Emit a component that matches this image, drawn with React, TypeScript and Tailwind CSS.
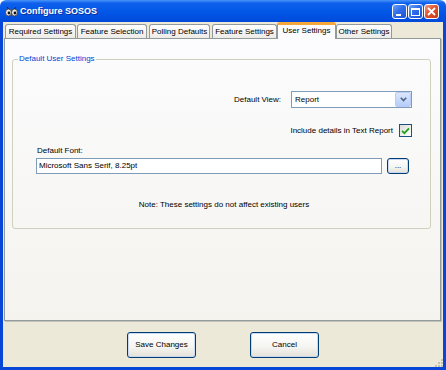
import React from 'react';

const tabs = [
  { label: 'Required Settings', w: 'w-[71px]', ml: 'ml-[1px]' },
  { label: 'Feature Selection', w: 'w-[70px]', ml: 'ml-[1px]' },
  { label: 'Polling Defaults', w: 'w-[61px]', ml: 'ml-[2px]' },
  { label: 'Feature Settings', w: 'w-[65px]', ml: 'ml-[2px]' },
  { label: 'User Settings', w: 'w-[59px]', ml: 'ml-0', active: true },
  { label: 'Other Settings', w: 'w-[56px]', ml: 'ml-0' },
];

const font = "font-['Liberation_Sans',Arial,sans-serif]";

const TitleIcon = () => (
  <svg width="13" height="11" viewBox="0 0 13 11">
    <path d="M2 1 L3.5 3 M11 1 L9.5 3" stroke="#222" strokeWidth="1" />
    <ellipse cx="3.5" cy="6.5" rx="3" ry="3.5" fill="#e8e8e8" stroke="#333" strokeWidth="0.8" />
    <ellipse cx="9.5" cy="6.5" rx="3" ry="3.5" fill="#e8e8e8" stroke="#333" strokeWidth="0.8" />
    <circle cx="4" cy="7" r="1.4" fill="#111" />
    <circle cx="10" cy="7" r="1.4" fill="#111" />
  </svg>
);

const CaptionButton = ({ kind }: { kind: 'min' | 'max' | 'close' }) => (
  <div
    className={`w-[15px] h-[15px] rounded-[3px] border border-white flex items-center justify-center ${
      kind === 'close'
        ? 'bg-[linear-gradient(135deg,#F29A7D_0%,#E2542F_45%,#C23A14_100%)]'
        : 'bg-[linear-gradient(135deg,#6FA3F7_0%,#2F6EEA_45%,#1D4FD4_100%)]'
    }`}
  >
    {kind === 'min' && <div className="w-[5px] h-[2px] bg-white mt-[7px] -ml-[3px]" />}
    {kind === 'max' && <div className="w-[9px] h-[8px] border border-white border-t-2" />}
    {kind === 'close' && (
      <svg width="9" height="9" viewBox="0 0 9 9">
        <path d="M1 1 L8 8 M8 1 L1 8" stroke="white" strokeWidth="1.8" />
      </svg>
    )}
  </div>
);

const XpButton = ({ children, className = '' }: { children: React.ReactNode; className?: string }) => (
  <div
    className={`flex items-center justify-center rounded-[3px] border border-[#003C74] bg-[linear-gradient(to_bottom,#FFFFFF_0%,#F4F4F0_60%,#E3E0D6_100%)] shadow-[inset_0_0_0_1px_#C9D8F3] text-black ${className}`}
  >
    {children}
  </div>
);

export default function App() {
  return (
    <div className={`w-[446px] h-[370px] flex flex-col ${font} text-[8px] leading-[10px] text-black`}>
      {/* title bar */}
      <div className="h-[22px] rounded-t-[6px] bg-[linear-gradient(to_bottom,#4A95F8_0%,#0E60EC_14%,#0257E6_55%,#0049DA_100%)] flex items-center pl-[5px] pr-[7px]">
        <TitleIcon />
        <span className="ml-[2px] text-white font-bold text-[9px] leading-[11px] [text-shadow:1px_1px_0_#0A2FA0]">
          Configure SOSOS
        </span>
        <div className="ml-auto flex gap-[1px] mt-[1px]">
          <CaptionButton kind="min" />
          <CaptionButton kind="max" />
          <CaptionButton kind="close" />
        </div>
      </div>

      {/* client */}
      <div className="flex-1 flex flex-col bg-[#ECE9D8] border-x-[3px] border-b-[3px] border-[#0846D8] relative">
        <div className="ml-[1px] w-[438px]">
          <div className="flex items-end h-[16px]">
            {tabs.map((t) =>
              t.active ? (
                <div
                  key={t.label}
                  className={`${t.w} ${t.ml} h-[17px] -mb-[1px] relative z-10 rounded-t-[3px] border-x border-[#919B9C] border-t-[3px] border-t-[#F5A73C] bg-[#FCFCFE] text-center leading-[11px]`}
                >
                  {t.label}
                </div>
              ) : (
                <div
                  key={t.label}
                  className={`${t.w} ${t.ml} h-[14px] rounded-t-[3px] border border-b-0 border-[#919B9C] bg-[linear-gradient(to_bottom,#FFFFFF,#ECEBE6)] text-center leading-[13px]`}
                >
                  {t.label}
                </div>
              )
            )}
          </div>

          {/* tab page */}
          <div className="h-[283px] w-[437px] border border-[#919B9C] bg-[linear-gradient(to_bottom,#FCFCFE,#F4F3EE)] shadow-[1px_1px_0_#C4C2B8] pt-[15px] pl-[7px]">
            <fieldset className="w-[419px] h-[175px] border border-[#D0D0BF] rounded-[3px] pl-[23px] pr-[18px]">
              <legend className="ml-[-18px] px-[1px] text-[#0046D5] leading-[10px]">Default User Settings</legend>

              <div className="flex items-center justify-end mt-[27px]">
                <span className="mr-[10px]">Default View:</span>
                <div className="w-[121px] h-[17px] border border-[#7F9DB9] bg-white flex items-center">
                  <span className="pl-[3px] flex-1">Report</span>
                  <div className="w-[16px] h-[15px] rounded-[2px] border border-[#B9CCF5] bg-[linear-gradient(to_bottom,#DCE7FD,#B6CDFA)] flex items-center justify-center">
                    <svg width="7" height="5" viewBox="0 0 7 5">
                      <path d="M0.8 0.8 L3.5 3.5 L6.2 0.8" fill="none" stroke="#4D6185" strokeWidth="1.6" />
                    </svg>
                  </div>
                </div>
              </div>

              <div className="flex items-center justify-end mt-[16px]">
                <span className="mr-[6px]">Include details in Text Report</span>
                <div className="w-[13px] h-[13px] border border-[#1C5180] bg-[linear-gradient(135deg,#DCDCD7,#FFFFFF)] flex items-center justify-center">
                  <svg width="9" height="8" viewBox="0 0 9 8">
                    <path d="M1 3.8 L3.4 6.2 L8 1.4" fill="none" stroke="#21A121" strokeWidth="1.8" />
                  </svg>
                </div>
              </div>

              <div className="mt-[9px] ml-[1px]">Default Font:</div>
              <div className="flex items-center mt-[2px]">
                <div className="w-[346px] h-[16px] border border-[#7F9DB9] bg-white flex items-center pl-[2px]">
                  Microsoft Sans Serif, 8.25pt
                </div>
                <XpButton className="ml-[5px] w-[22px] h-[16px] leading-[8px]">...</XpButton>
              </div>

              <div className="mt-[26px] text-center">Note: These settings do not affect existing users</div>
            </fieldset>
          </div>
        </div>

        {/* buttons */}
        <div className="flex justify-center gap-[54px] mt-[11px]">
          <XpButton className="w-[69px] h-[26px]">Save Changes</XpButton>
          <XpButton className="w-[69px] h-[26px]">Cancel</XpButton>
        </div>

        <svg className="absolute right-0 bottom-0" width="8" height="8" viewBox="0 0 8 8">
          <rect x="6" y="0" width="2" height="2" fill="#C5C2B2" />
          <rect x="3" y="3" width="2" height="2" fill="#C5C2B2" />
          <rect x="6" y="3" width="2" height="2" fill="#C5C2B2" />
          <rect x="0" y="6" width="2" height="2" fill="#C5C2B2" />
          <rect x="3" y="6" width="2" height="2" fill="#C5C2B2" />
          <rect x="6" y="6" width="2" height="2" fill="#C5C2B2" />
        </svg>
      </div>
    </div>
  );
}
